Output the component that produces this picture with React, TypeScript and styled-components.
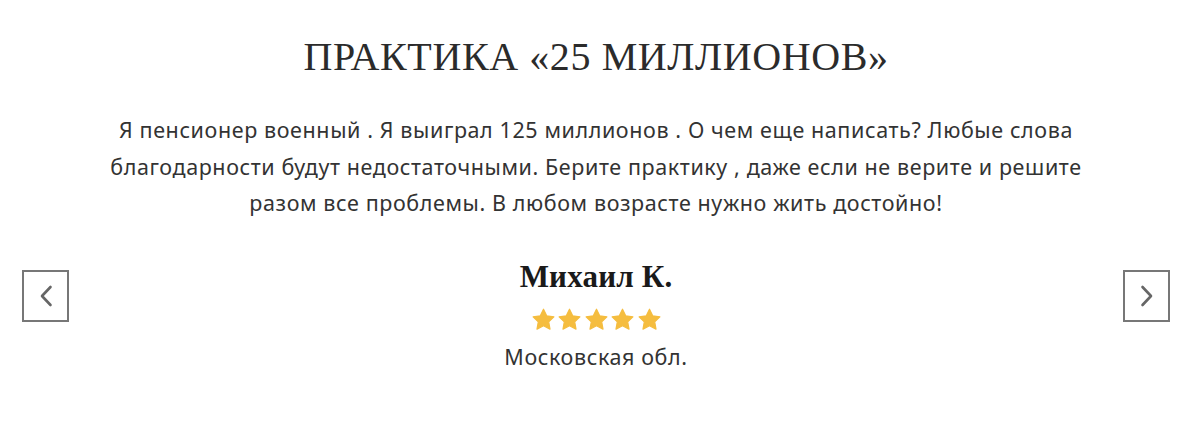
import React from 'react';
import styled, {createGlobalStyle} from "styled-components";

const GlobalStyle = createGlobalStyle`
    html, body {
        margin: 0;
        padding: 0;
        background: #ffffff;
    }
`

const Section = styled.section`
    width: 1200px;
    height: 447px;
    box-sizing: border-box;
    padding: 30px 30px 0 22px;
    display: flex;
    flex-direction: column;
    align-items: center;
`
const Title = styled.h2`
    margin: 0;
    font-family: "Liberation Serif", "DejaVu Serif", serif;
    font-weight: normal;
    font-size: 40px;
    line-height: 54px;
    color: #2b2b2b;
    letter-spacing: 0.6px;
`
const Quote = styled.p`
    margin: 28px 0 0;
    font-family: "Noto Sans", sans-serif;
    font-size: 21.5px;
    line-height: 36.5px;
    letter-spacing: 0.6px;
    color: #333333;
    text-align: center;
`
const AuthorRow = styled.div`
    align-self: stretch;
    margin-top: 35px;
    display: flex;
    justify-content: space-between;
    align-items: flex-start;
`
const Author = styled.div`
    display: flex;
    flex-direction: column;
    align-items: center;
`
const Name = styled.div`
    font-family: "Liberation Serif", "DejaVu Serif", serif;
    font-weight: bold;
    font-size: 31px;
    line-height: 40px;
    letter-spacing: 0.2px;
    color: #1a1a1a;
`
const Stars = styled.div`
    display: flex;
    gap: 1.5px;
    margin-top: 11px;
`
const Place = styled.div`
    margin-top: 11px;
    font-family: "Noto Sans", sans-serif;
    font-size: 21.5px;
    line-height: 30px;
    letter-spacing: 0.6px;
    color: #333333;
`
const Arrow = styled.button`
    width: 47px;
    height: 52px;
    margin-top: 13px;
    padding: 0;
    box-sizing: border-box;
    border: 2px solid #777777;
    background: #ffffff;
    display: flex;
    align-items: center;
    justify-content: center;
    cursor: pointer;
`

function Star() {
    return (
        <svg width="25" height="23" viewBox="0 0 24 23">
            <path
                d="M12 1.2l3.2 6.6 7.2 1-5.2 5.1 1.3 7.2L12 17.7l-6.5 3.4 1.3-7.2L1.6 8.8l7.2-1z"
                fill="#f5bd3f"
                stroke="#f5bd3f"
                strokeWidth="1.2"
                strokeLinejoin="round"
            />
        </svg>
    )
}

function Chevron({dir}: { dir: 'left' | 'right' }) {
    return (
        <svg width="16" height="24" viewBox="0 0 16 24">
            <path
                d={dir === 'left' ? "M12.5 3L4 12l8.5 9" : "M3.5 3L12 12l-8.5 9"}
                fill="none"
                stroke="#666666"
                strokeWidth="2.6"
                strokeLinecap="round"
                strokeLinejoin="round"
            />
        </svg>
    )
}

function App() {
    return (
        <>
            <GlobalStyle/>
            <Section>
                <Title>ПРАКТИКА «25 МИЛЛИОНОВ»</Title>
                <Quote>
                    Я пенсионер военный . Я выиграл 125 миллионов . О чем еще написать? Любые слова<br/>
                    благодарности будут недостаточными. Берите практику , даже если не верите и решите<br/>
                    разом все проблемы. В любом возрасте нужно жить достойно!
                </Quote>
                <AuthorRow>
                    <Arrow aria-label="Назад"><Chevron dir="left"/></Arrow>
                    <Author>
                        <Name>Михаил К.</Name>
                        <Stars>
                            {[0, 1, 2, 3, 4].map((i) => <Star key={i}/>)}
                        </Stars>
                        <Place>Московская обл.</Place>
                    </Author>
                    <Arrow aria-label="Вперёд"><Chevron dir="right"/></Arrow>
                </AuthorRow>
            </Section>
        </>
    )
}

export default App;
